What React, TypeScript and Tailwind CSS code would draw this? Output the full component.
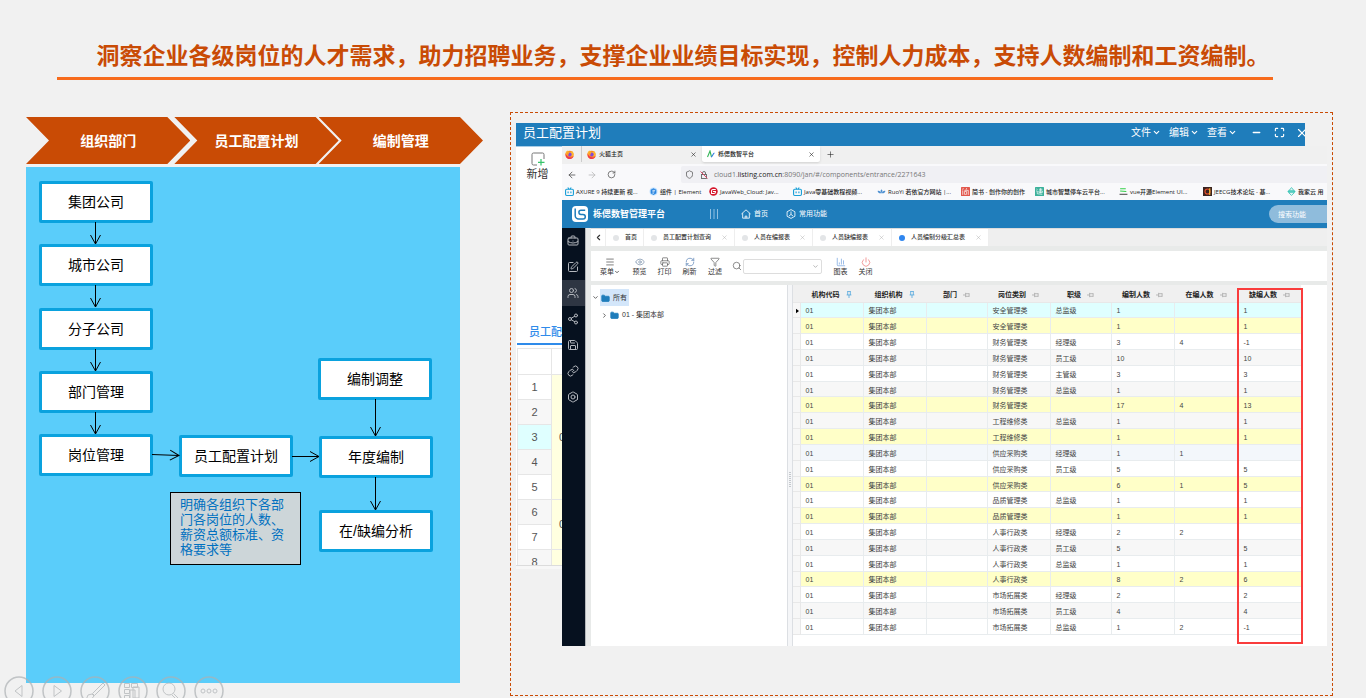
import React from "react";
import {
  ArrowLeft,
  ArrowRight,
  Bolt,
  BriefcaseBusiness,
  ChartColumn,
  ChevronDown,
  ChevronLeft,
  ChevronRight,
  Eye,
  Folder,
  Funnel,
  Link,
  Maximize,
  Menu,
  Minus,
  Plus,
  Power,
  Printer,
  RefreshCw,
  RotateCw,
  Save,
  Search,
  Share2,
  Shield,
  SquarePen,
  Users,
  X,
} from "lucide-react";

const steps = [
  { label: "组织部门", className: "" },
  { label: "员工配置计划", className: "-ml-4" },
  { label: "编制管理", className: "-ml-5" },
];

const nodes = [
  { label: "集团公司", className: "left-[13px] top-[14px]" },
  { label: "城市公司", className: "left-[13px] top-[77px]" },
  { label: "分子公司", className: "left-[13px] top-[141px]" },
  { label: "部门管理", className: "left-[13px] top-[204px]" },
  { label: "岗位管理", className: "left-[13px] top-[267px]" },
  { label: "员工配置计划", className: "left-[153px] top-[268px]" },
  { label: "编制调整", className: "left-[292px] top-[191px]" },
  { label: "年度编制", className: "left-[293px] top-[269px]" },
  { label: "在/缺编分析", className: "left-[293px] top-[343px]" },
];

const arrows = [
  "M69.5 55V77",
  "M69.5 118V140",
  "M69.5 182V204",
  "M69.5 245V267",
  "M126 287.5L153 288.5",
  "M266 289.5H293",
  "M349.5 232V269",
  "M349.5 310V343",
];

const backRows = [
  { no: 1, span: 5, code: "01" },
  { no: 2 },
  { no: 3 },
  { no: 4 },
  { no: 5 },
  { no: 6, span: 2, code: "01" },
  { no: 7 },
  { no: 8, span: 1, code: "" },
];

const columns = [
  { title: "机构代码", pinned: true, width: "w-[63px]" },
  { title: "组织机构", pinned: true, width: "w-[63px]" },
  { title: "部门", pinned: false, width: "w-[61px]" },
  { title: "岗位类别", pinned: false, width: "w-[63px]" },
  { title: "职级", pinned: false, width: "w-[61px]" },
  { title: "编制人数", pinned: false, width: "w-[63px]" },
  { title: "在编人数", pinned: false, width: "w-[64px]" },
  { title: "缺编人数", pinned: false, width: "w-[63px]" },
];

// [row colour, 岗位类别, 职级, 编制, 在编, 缺编]
const rows: string[][] = [
  ["bg-[#dfffff]", "安全管理类", "总监级", "1", "", "1"],
  ["bg-[#ffffc8]", "安全管理类", "", "1", "", "1"],
  ["bg-white", "财务管理类", "经理级", "3", "4", "-1"],
  ["bg-[#f7f7f7]", "财务管理类", "员工级", "10", "", "10"],
  ["bg-white", "财务管理类", "主管级", "3", "", "3"],
  ["bg-[#f7f7f7]", "财务管理类", "总监级", "1", "", "1"],
  ["bg-[#ffffc8]", "财务管理类", "", "17", "4", "13"],
  ["bg-[#f7f7f7]", "工程维修类", "总监级", "1", "", "1"],
  ["bg-[#ffffc8]", "工程维修类", "", "1", "", "1"],
  ["bg-[#f3f7fb]", "供应采购类", "经理级", "1", "1", ""],
  ["bg-white", "供应采购类", "员工级", "5", "", "5"],
  ["bg-[#ffffc8]", "供应采购类", "", "6", "1", "5"],
  ["bg-white", "品质管理类", "总监级", "1", "", "1"],
  ["bg-[#ffffc8]", "品质管理类", "", "1", "", "1"],
  ["bg-white", "人事行政类", "经理级", "2", "2", ""],
  ["bg-[#f7f7f7]", "人事行政类", "员工级", "5", "", "5"],
  ["bg-white", "人事行政类", "总监级", "1", "", "1"],
  ["bg-[#ffffc8]", "人事行政类", "", "8", "2", "6"],
  ["bg-white", "市场拓展类", "经理级", "2", "", "2"],
  ["bg-[#f7f7f7]", "市场拓展类", "员工级", "4", "", "4"],
  ["bg-white", "市场拓展类", "总监级", "1", "2", "-1"],
];

const FirefoxIcon = () => (
  <svg viewBox="0 0 16 16" className="size-[9px] shrink-0">
    <circle cx="8" cy="8.5" r="7.2" fill="#ff8a1f" />
    <path d="M1 7c0-3 2-5 4-6 0 2 2 2 4 3l4-2c2 2 3 5 2 8-3 2-11 1-14-3z" fill="#ffb52e" />
    <path d="M1 6C.5 12 4 16 8.500 16c4 0 6.500-3 7-6-2 3-5 3.500-7 3C4 12 3 9 1 6z" fill="#f0364f" />
    <circle cx="8.500" cy="8" r="3.400" fill="#8248d8" />
    <path d="M3 5c2-1 4 0 4.500 1.200C6.500 7 5.500 8 6 10 4 9 3 7 3 5z" fill="#ff9a26" />
  </svg>
);

const TvIcon = () => (
  <svg viewBox="0 0 16 16" className="size-[9px] shrink-0" fill="none" stroke="#1ba0d8" strokeWidth="2">
    <path d="M5 1l2 3M11 1L9 4" />
    <rect x="1" y="4" width="14" height="11" rx="2" />
    <path d="M5.500 8v3M10.500 8v3" />
  </svg>
);

const bookmarks = [
  { label: "AXURE 9 持续更新 视...", width: "w-[84px]", icon: <TvIcon /> },
  {
    label: "组件 | Element",
    width: "w-[60px]",
    icon: (
      <svg viewBox="0 0 16 16" className="size-[9px] shrink-0">
        <circle cx="8" cy="8" r="7" fill="#bfe0ff" />
        <path d="M8 2l5 3v6l-5 3-5-3V5z" fill="#2a86e0" />
        <path d="M6 6h5M6 8.500h4M6 11h3" stroke="#fff" strokeWidth="1.300" />
      </svg>
    ),
  },
  {
    label: "JavaWeb_Cloud: Jav...",
    width: "w-[84px]",
    icon: (
      <svg viewBox="0 0 16 16" className="size-[9px] shrink-0">
        <circle cx="8" cy="8" r="7.500" fill="#d5162c" />
        <path d="M12 4.500H7a2.500 2.500 0 0 0-2.500 2.500v4.500H9a2.500 2.500 0 0 0 2.500-2.500V8H7" fill="none" stroke="#fff" strokeWidth="1.800" />
      </svg>
    ),
  },
  { label: "Java零基础教程视频...", width: "w-[84px]", icon: <TvIcon /> },
  {
    label: "RuoYi 若依官方网站 |...",
    width: "w-[84px]",
    icon: (
      <svg viewBox="0 0 16 16" className="size-[9px] shrink-0" fill="#4c8fd0">
        <path d="M8 4l2 3-2 4-2-4z" />
        <path d="M1 7c3-1 5 1 7 4-4 1-6-1-7-4zM15 7c-3-1-5 1-7 4 4 1 6-1 7-4z" />
      </svg>
    ),
  },
  {
    label: "简书 - 创作你的创作",
    width: "w-[74px]",
    icon: (
      <svg viewBox="0 0 16 16" className="size-[9px] shrink-0">
        <rect width="16" height="16" rx="1" fill="#e2574c" />
        <path d="M4 2l-1 3M10 2L9 5M3 6v8M6 6h7v8M6 8h4v5H6z" fill="none" stroke="#fff" strokeWidth="1.200" />
      </svg>
    ),
  },
  {
    label: "城市智慧停车云平台...",
    width: "w-[84px]",
    icon: (
      <svg viewBox="0 0 16 16" className="size-[9px] shrink-0">
        <rect width="16" height="16" rx="1" fill="#3cb19b" />
        <path d="M3 3l1 2M2 7h2v5l9 1M7 4h6M10 2v9M7 7h6v3H7z" fill="none" stroke="#fff" strokeWidth="1.200" />
      </svg>
    ),
  },
  {
    label: "vue开源Element UI...",
    width: "w-[84px]",
    icon: (
      <svg viewBox="0 0 16 16" className="size-[9px] shrink-0" fill="none" strokeWidth="2">
        <path d="M2 3h10M2 7l11 1" stroke="#35d04a" />
        <path d="M1 13h14" stroke="#555" />
      </svg>
    ),
  },
  {
    label: "JEECG技术论坛 - 基...",
    width: "w-[84px]",
    icon: (
      <svg viewBox="0 0 16 16" className="size-[9px] shrink-0">
        <rect width="16" height="16" fill="#3a2320" />
        <circle cx="8" cy="8" r="4.500" fill="none" stroke="#e8502a" strokeWidth="2" />
        <path d="M12 2v12" stroke="#f0c030" strokeWidth="2" />
      </svg>
    ),
  },
  {
    label: "我家云 用",
    width: "w-[38px]",
    icon: (
      <svg viewBox="0 0 16 16" className="size-[9px] shrink-0" fill="none" stroke="#35c4b4" strokeWidth="1.500">
        <path d="M4 6l4-5 4 5M1 8h14M3 10l5 5 5-5M3 6h10v4H3z" />
      </svg>
    ),
  },
];

const pageTabs = [
  { label: "首页", width: "w-[38px]", closable: false, active: false },
  { label: "员工配置计划查询", width: "w-[91px]", closable: true, active: false },
  { label: "人员在编报表", width: "w-[78px]", closable: true, active: false },
  { label: "人员缺编报表", width: "w-[79px]", closable: true, active: false },
  { label: "人员编制分级汇总表", width: "w-[97px]", closable: true, active: true },
];

const sideItems = [
  { name: "工作台", Icon: BriefcaseBusiness },
  { name: "编辑", Icon: SquarePen },
  { name: "人员", Icon: Users },
  { name: "共享", Icon: Share2 },
  { name: "保存", Icon: Save },
  { name: "链接", Icon: Link },
  { name: "设置", Icon: Bolt },
];

const tools = [
  { label: "菜单", width: "w-[34px]", Icon: Menu, color: "text-[#555]" },
  { label: "预览", width: "w-[25px]", Icon: Eye, color: "text-[#7e93ad]" },
  { label: "打印", width: "w-[25px]", Icon: Printer, color: "text-[#666]" },
  { label: "刷新", width: "w-[25px]", Icon: RefreshCw, color: "text-[#5f86b8]" },
  { label: "过滤", width: "w-[26px]", Icon: Funnel, color: "text-[#666]" },
];

const Pin: React.FC<{ pinned: boolean }> = ({ pinned }) =>
  pinned ? (
    <svg viewBox="0 0 6 8" className="h-[7px] w-[6px]" fill="none" stroke="#4aa3dc" strokeWidth="0.900">
      <path d="M1 0.500h4M1.500 0.500v4M4.500 0.500v4M0.300 4.500h5.400M3 4.500V8" />
    </svg>
  ) : (
    <svg viewBox="0 0 8 6" className="h-[6px] w-[7px]" fill="none" stroke="#aaa" strokeWidth="0.900">
      <path d="M0 3h3M3 0.500v5M3 1.500h4M3 4.500h4M7 1v4" />
    </svg>
  );

const Diagram: React.FC = () => (
  <div className="relative mt-[3px] mr-[23px] flex-1 bg-[#5acdfa]">
    {nodes.map((node) => (
      <div
        key={node.label}
        className={`absolute flex h-[42px] w-[114px] items-center justify-center rounded-xs border-3 border-[#0aa2de] bg-white text-sm text-black ${node.className}`}
      >
        {node.label}
      </div>
    ))}
    <p className="absolute top-[325px] left-[144px] h-[73px] w-[131px] border border-black bg-[#cdd6d9] px-[9px] pt-1 text-[13px] leading-[15px] text-[#0070c0]">
      明确各组织下各部门各岗位的人数、薪资总额标准、资格要求等
    </p>
    <svg width="434" height="400" className="absolute top-0 left-0" fill="none" stroke="#000" aria-hidden="true">
      <defs>
        <marker id="head" markerWidth="12" markerHeight="12" refX="9.500" refY="6" orient="auto" markerUnits="userSpaceOnUse">
          <path d="M0.500 1L9.500 6L0.500 11" stroke="#000" fill="none" />
        </marker>
      </defs>
      {arrows.map((d) => (
        <path key={d} d={d} markerEnd="url(#head)" />
      ))}
    </svg>
  </div>
);

const BackWindow: React.FC = () => (
  <div className="absolute top-[10px] right-[27px] left-[5px] h-[446px] overflow-hidden bg-white">
    <div className="flex h-6 items-center border-b border-[#a9cde6] bg-[#1f7dbb] pb-1 text-white">
      <h2 className="flex-1 pl-[7px] text-[13px] leading-4">员工配置计划</h2>
      <div className="-mr-1 flex items-center text-[10px] leading-4">
        {["文件", "编辑", "查看"].map((label) => (
          <button key={label} className="mr-2 flex items-center gap-px">
            {label}
            <ChevronDown className="size-[9px]" strokeWidth={3} />
          </button>
        ))}
        <button aria-label="最小化" className="ml-1.5">
          <Minus className="size-[11px]" strokeWidth={3} />
        </button>
        <button aria-label="全屏" className="ml-3">
          <Maximize className="size-[11px]" strokeWidth={2.5} />
        </button>
        <button aria-label="关闭" className="ml-2.5">
          <X className="size-3.5" />
        </button>
      </div>
    </div>
    <button className="mt-[5px] ml-[10px] flex w-[23px] flex-col items-center text-[11px] leading-4 text-[#333]">
      <svg viewBox="0 0 14 14" className="size-[14px]" fill="none">
        <path d="M13 7V2.500a1.500 1.500 0 0 0-1.500-1.500h-9A1.500 1.500 0 0 0 1 2.500v9A1.500 1.500 0 0 0 2.500 13H6" stroke="#777" />
        <path d="M10 7v6.500M7 10.300h6.500" stroke="#35c46a" strokeWidth="1.200" />
      </svg>
      新增
    </button>
    <div className="mt-[142px] ml-px h-[21px] border-b-2 border-[#2f8bea] pl-3 text-[11px] leading-4 font-medium text-[#2f8bea]">
      员工配置计划
    </div>
    <table className="mt-[3px] ml-px w-[200px] table-fixed border-collapse text-[11px] text-[#555]">
      <thead>
        <tr className="h-[26px]">
          <th className="w-[34px] border border-[#e6e6e6]" />
          <th className="border border-[#e6e6e6]" />
        </tr>
      </thead>
      <tbody>
        {backRows.map((row) => (
          <tr key={row.no} className="h-[25px]">
            <td
              className={`border border-[#e6e6e6] text-center ${
                row.no === 3 ? "bg-[#dfffff]" : row.no % 2 === 0 ? "bg-[#f7f7f7]" : "bg-white"
              }`}
            >
              {row.no}
            </td>
            {row.span && (
              <td rowSpan={row.span} className="border border-[#e6e6e6] bg-[#ffffe0] pl-[7px]">
                {row.code}
              </td>
            )}
          </tr>
        ))}
      </tbody>
    </table>
    <div className="absolute inset-x-0 bottom-0 h-1 border-t border-[#dcdcdc] bg-[#f7f7f7]" />
  </div>
);

const BrowserChrome: React.FC = () => (
  <div className="overflow-hidden bg-[#f9f9fb] font-['Open_Sans','Noto_Sans_CJK_SC',sans-serif] text-[6px] leading-[10px] text-[#222]">
    <div className="flex h-[18px] bg-[#f0f0f0] pb-0.5">
      <div className="flex w-5 items-center border-r border-[#ccc] pl-[3px]">
        <FirefoxIcon />
      </div>
      <div className="flex w-[120px] items-center gap-[3px] px-[5px]">
        <FirefoxIcon />
        <span className="flex-1 font-medium">火狐主页</span>
        <X className="size-[7px]" />
      </div>
      <div className="flex w-[118px] items-center gap-[3px] rounded-b-xs bg-white px-[5px] shadow">
        <svg viewBox="0 0 16 16" className="size-2 shrink-0" fill="none" strokeWidth="2.200">
          <path d="M1 14L6 2l3 12" stroke="#35b558" />
          <path d="M8 14c3 0 4-8 7-8" stroke="#2f7de0" />
        </svg>
        <span className="flex-1 font-medium">栎偲数智平台</span>
        <X className="size-[7px]" />
      </div>
      <button aria-label="新标签页" className="ml-[6px]">
        <Plus className="size-[9px]" strokeWidth={1.5} />
      </button>
    </div>
    <div className="flex h-[19px] items-center pt-0.5">
      <div className="flex w-[119px] items-center gap-[10px] pl-[5px] text-[#555]">
        <ArrowLeft className="size-[10px]" />
        <ArrowRight className="size-[10px] text-[#bbb]" />
        <RotateCw className="size-[9px]" />
      </div>
      <div className="flex h-[17px] flex-1 items-center rounded-l-xs bg-[#f0f0f4] pl-1 text-[7px] text-[#777]">
        <Shield className="size-[9px] text-[#555]" />
        <svg viewBox="0 0 16 16" className="mr-[6px] ml-[6px] size-2" fill="none" stroke="#666" strokeWidth="1.800">
          <rect x="3" y="7" width="10" height="8" />
          <path d="M5 7V4a3 3 0 0 1 6 0v3" />
          <path d="M1 1l14 14" stroke="#e2395b" />
        </svg>
        <span>
          cloud1.<span className="text-[#222]">listing.com.cn</span>:8090/jan/#/components/entrance/2271643
        </span>
      </div>
    </div>
    <nav className="flex h-[17px] items-center pl-[3px]">
      {bookmarks.map((item) => (
        <a key={item.label} href="#" className={`flex shrink-0 items-center gap-0.5 font-medium whitespace-nowrap ${item.width}`}>
          {item.icon}
          {item.label}
        </a>
      ))}
    </nav>
  </div>
);

const AppHeader: React.FC = () => (
  <div className="flex h-7 items-center bg-[#1f7dbb] pl-[10px] text-[7px] text-white">
    <svg viewBox="0 0 16 16" className="size-4" fill="none">
      <rect width="16" height="16" rx="4" fill="#fff" />
      <path d="M3.200 2.500v7a3.500 3.500 0 0 0 3.500 3.500H11a2.200 2.200 0 0 0 0-4.600H9a1.900 1.900 0 0 1 0-4.200h4.200" stroke="#1f7dbb" strokeWidth="1.500" />
    </svg>
    <strong className="ml-[5px] w-[117px] pt-0.5 text-[9px]">栎偲数智管理平台</strong>
    <svg viewBox="0 0 8 10" className="h-[10px] w-2" stroke="#8fc0e2">
      <path d="M0.500 0v10M4 0v10M7.500 0v10" />
    </svg>
    <a href="#" className="ml-[23px] flex items-center gap-[3px]">
      <svg viewBox="0 0 12 12" className="size-[10px]" fill="none" stroke="#fff">
        <path d="M0.500 6L6 1l5.500 5M2 5v6h8V5M5 11V8.500h2V11" />
      </svg>
      首页
    </a>
    <a href="#" className="ml-[18px] flex items-center gap-[3px]">
      <svg viewBox="0 0 12 12" className="size-[10px]" fill="none" stroke="#fff">
        <path d="M6 0.700l4.700 2.600v5.400L6 11.300 1.300 8.700V3.300zM6 3v3.500M6 6.500L3.500 8.500M6 6.500l2.500 2" />
      </svg>
      常用功能
    </a>
    <input
      aria-label="搜索功能"
      placeholder="搜索功能"
      className="ml-auto h-[18px] w-[58px] rounded-l-full bg-[#8fbcdc] pl-[9px] text-[7px] text-white placeholder:text-white"
    />
  </div>
);

const PageTabs: React.FC = () => (
  <div className="flex h-[18px] border-t border-[#dcdcdc] bg-[#efefef] text-[6px] text-[#333]">
    <button aria-label="向左滚动" className="flex w-[15px] items-center justify-center border-r border-[#eee] bg-white">
      <ChevronLeft className="size-[9px]" strokeWidth={3} />
    </button>
    {pageTabs.map((tab) => (
      <div key={tab.label} className={`flex items-center border-r border-[#eee] bg-white pr-[6px] pl-[7px] ${tab.width}`}>
        <span className={`mr-[6px] size-[6px] rounded-full ${tab.active ? "bg-[#2f86ef]" : "bg-[#e3e5e7]"}`} />
        <span className="flex-1 font-medium whitespace-nowrap">{tab.label}</span>
        {tab.closable && <X className="size-[7px] text-[#aaa]" strokeWidth={1.5} />}
      </div>
    ))}
  </div>
);

const Toolbar: React.FC = () => (
  <div className="mt-[5px] flex h-[30px] items-center bg-white pl-0.5 text-[7px] leading-[10px] text-[#333]">
    {tools.map(({ label, width, Icon, color }) => (
      <button key={label} className={`flex flex-col items-center pt-px ${width}`}>
        <Icon className={`size-[10px] ${color}`} strokeWidth={1.8} />
        <span className="flex items-center whitespace-nowrap">
          {label}
          {label === "菜单" && <ChevronDown className="size-[6px]" strokeWidth={3} />}
        </span>
      </button>
    ))}
    <label htmlFor="query" className="ml-1">
      <Search className="size-[10px] text-[#666]" strokeWidth={1.8} aria-label="查询" />
    </label>
    <div className="relative ml-px">
      <select id="query" className="h-[15px] w-[79px] appearance-none rounded-xs border border-[#ddd] bg-white" />
      <ChevronDown className="pointer-events-none absolute top-1 right-[3px] size-[7px] text-[#888]" />
    </div>
    <button className="ml-[6px] flex w-[25px] flex-col items-center pt-px">
      <ChartColumn className="size-[10px] text-[#7aa6e0]" strokeWidth={1.8} />
      图表
    </button>
    <button className="flex w-[25px] flex-col items-center pt-px">
      <Power className="size-[10px] text-[#ee7d7d]" strokeWidth={1.8} />
      关闭
    </button>
  </div>
);

const OrgTree: React.FC = () => (
  <ul className="w-[196px] shrink-0 bg-white pt-1 text-[7px] text-[#333]">
    <li className="flex h-[17px] items-center pl-px">
      <ChevronDown className="size-[7px]" strokeWidth={2.5} />
      <span className="ml-px flex h-[17px] items-center gap-[3px] bg-[#d3e6fa] pt-px pr-0.5 pl-px">
        <Folder className="size-[9px] text-[#1f7dbb]" fill="currentColor" />
        所有
      </span>
    </li>
    <li className="flex h-[17px] items-center pt-px pl-[10px]">
      <ChevronRight className="size-[7px]" strokeWidth={2.5} />
      <Folder className="mr-[3px] ml-[2px] size-[9px] text-[#1f7dbb]" fill="currentColor" />
      01 - 集团本部
    </li>
  </ul>
);

const StaffTable: React.FC = () => (
  <div className="relative min-w-0 flex-1 overflow-hidden bg-white">
    <table className="h-[350px] w-[508px] table-fixed border-collapse text-[7px] leading-[10px] text-[#444]">
      <thead>
        <tr className="h-[17px] bg-[#f0f0f0] text-[#222]">
          <th className="w-[7px]" />
          {columns.map((col) => (
            <th key={col.title} className={`border-b border-[#e8e8e8] px-0 pt-[3px] pb-0 ${col.width}`}>
              <span className="flex items-center justify-center gap-[6px] whitespace-nowrap">
                {col.title}
                <Pin pinned={col.pinned} />
              </span>
            </th>
          ))}
        </tr>
      </thead>
      <tbody>
        {rows.map(([color, ...cells], i) => (
          <tr key={i} className={color}>
            <td className="border border-l-0 border-[#e8e8e8] bg-[#f7f7f7] px-0 pt-[3px] pb-0">
              {i === 0 && (
                <svg viewBox="0 0 4 6" className="ml-[3px] h-[6px] w-[3px]">
                  <path d="M0 0l4 3-4 3z" fill="#000" />
                </svg>
              )}
            </td>
            {["01", "集团本部", "", ...cells].map((cell, j) => (
              <td key={j} className="border border-[#e8ecee] pt-[3px] pr-0 pb-0 pl-[5px] whitespace-nowrap">
                {cell}
              </td>
            ))}
          </tr>
        ))}
      </tbody>
    </table>
    <div className="absolute top-[3px] left-[444px] h-[356px] w-[66px] border-2 border-[#f93c3c]" />
  </div>
);

const FrontWindow: React.FC = () => (
  <div className="relative mt-[33px] mr-[5px] mb-[49px] ml-[51px] overflow-hidden bg-[#e8eae9]">
    <BrowserChrome />
    <AppHeader />
    <div className="flex">
      <nav className="w-[23px] shrink-0 bg-[#06111f]">
        {sideItems.map(({ name, Icon }) => (
          <button
            key={name}
            aria-label={name}
            className={`flex h-[26px] w-full items-center justify-center pr-0.5 text-[#b4b8be] ${name === "人员" ? "bg-[#2e3643]" : ""}`}
          >
            <Icon className="size-3" strokeWidth={2} />
          </button>
        ))}
      </nav>
      <div className="min-w-0 flex-1 border-l border-[#b4b7ba] pl-[5px]">
        <PageTabs />
        <Toolbar />
        <div className="mt-1 flex h-[361px]">
          <OrgTree />
          <div className="flex w-[6px] shrink-0 flex-col items-center justify-center gap-px border-x border-[#dcdfe3] bg-[#f5f6f8] pt-7">
            {[0, 1, 2, 3, 4, 5, 6, 7].map((dot) => (
              <span key={dot} className="h-px w-0.5 bg-[#c4c8cc]" />
            ))}
          </div>
          <StaffTable />
        </div>
      </div>
    </div>
  </div>
);

const controls = [
  { name: "上一张", d: "M18 9.500v11L11 15z" },
  { name: "下一张", d: "M12 9.500v11L19.500 15z" },
  { name: "画笔", d: "M23 7L12.500 17.500l2 2L25 9zM12 18l-4 1-2 5 6-1.500 2-2.500z" },
  { name: "所有幻灯片", d: "M6.500 7.500h5v4h-5zM13.500 7.500h6v4h-6zM6.500 13.500h5v4h-5zM6.500 19.500h5v4h-5zM15 11h6v11h-6zM12 14h5v9h-5z" },
  { name: "放大", d: "M19 13a6 6 0 1 1-12 0 6 6 0 0 1 12 0zM17.500 17.500l5.500 5.500M16 19l5 5" },
  { name: "更多", d: "M11 15a2 2 0 1 1-4 0 2 2 0 0 1 4 0zM17 15a2 2 0 1 1-4 0 2 2 0 0 1 4 0zM23 15a2 2 0 1 1-4 0 2 2 0 0 1 4 0z" },
];

const SlideControls: React.FC = () => (
  <div className="absolute -bottom-2 left-1 flex gap-2">
    {controls.map((item) => (
      <button key={item.name} aria-label={item.name} className="size-[30px]">
        <svg viewBox="0 0 30 30" fill="none" stroke="#adb1b4" className="opacity-70">
          <circle cx="15" cy="15" r="14" strokeWidth="1.500" />
          <path d={item.d} />
        </svg>
      </button>
    ))}
  </div>
);

const App: React.FC = () => {
  return (
    <div className="relative flex min-h-screen flex-col overflow-hidden bg-[#f1f1f1] pb-0.5 font-['Liberation_Sans','Noto_Sans_CJK_SC',sans-serif]">
      <header className="pt-10">
        <h1 className="text-center text-[23px] leading-8 font-bold whitespace-nowrap text-[#c94b05]">
          洞察企业各级岗位的人才需求，助力招聘业务，支撑企业业绩目标实现，控制人力成本，支持人数编制和工资编制。
        </h1>
        <div className="mt-[5px] mr-[93px] ml-[57px] h-[3px] bg-[#f76b1c]" />
      </header>
      <main className="mt-8 flex flex-1 gap-[27px] pr-[33px] pl-[26px]">
        <section className="flex w-[457px] shrink-0 flex-col pt-[5px] pb-[13px]">
          <ol className="flex h-[47px]">
            {steps.map((step) => (
              <li
                key={step.label}
                className={`flex flex-1 items-center justify-center bg-[#c94b05] text-sm font-bold text-white [clip-path:polygon(0_0,calc(100%-23px)_0,100%_50%,calc(100%-23px)_100%,0_100%,23px_50%)] ${step.className}`}
              >
                {step.label}
              </li>
            ))}
          </ol>
          <Diagram />
        </section>
        <section className="relative min-w-0 flex-1 border border-dashed border-[#c94b05]">
          <BackWindow />
          <FrontWindow />
        </section>
      </main>
      <SlideControls />
    </div>
  );
};

export default App;
